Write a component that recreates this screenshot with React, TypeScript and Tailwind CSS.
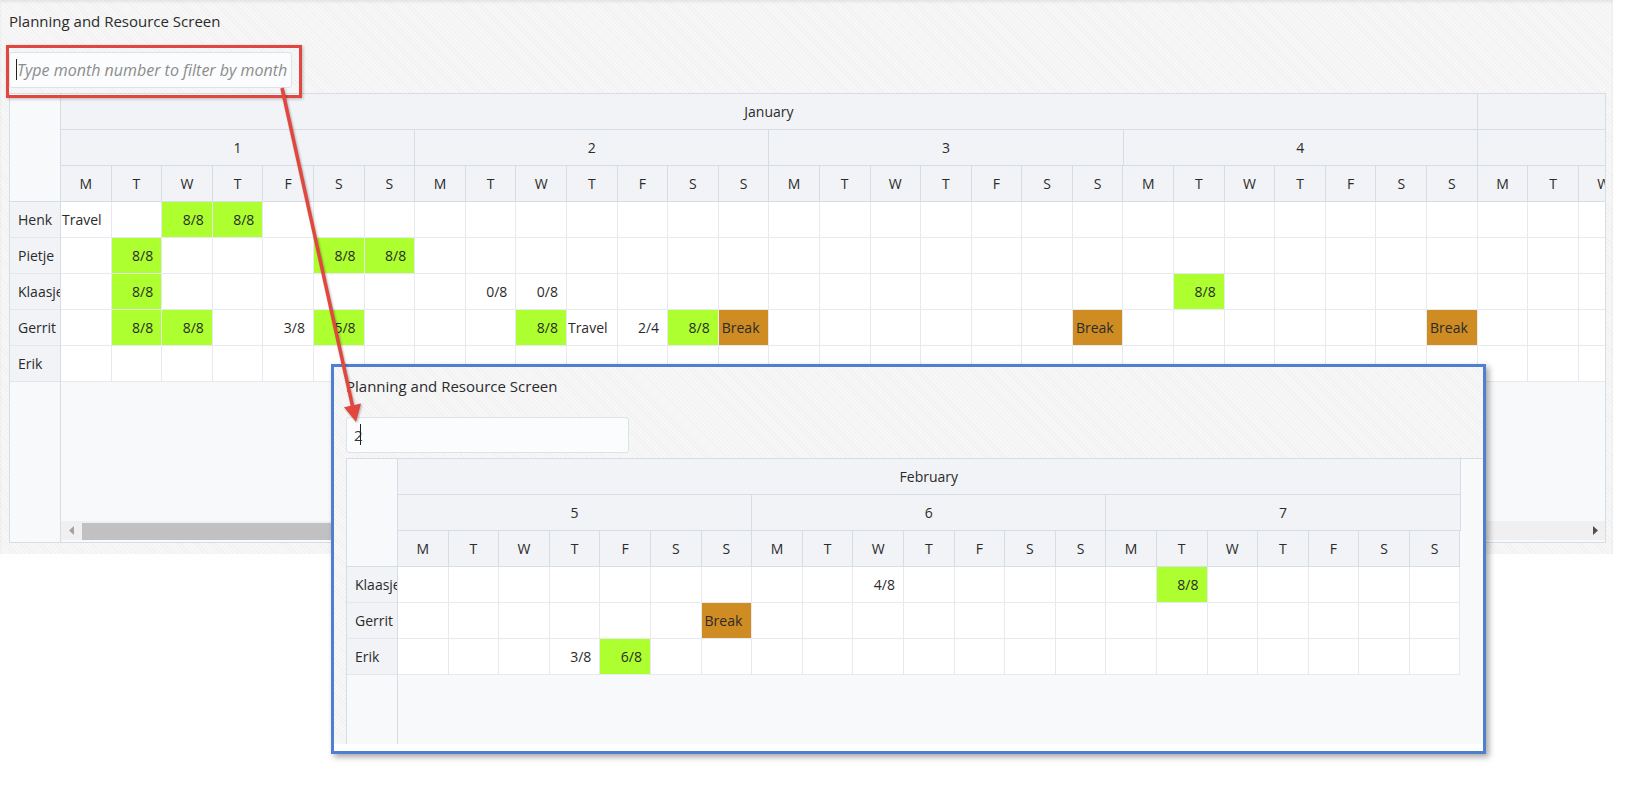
import clsx from 'clsx';

type Kind = 'ok' | 'plain' | 'travel' | 'break';
type Cell = { t: string; k: Kind };
type Row = { name: string; cells: Record<number, Cell> };
type Span = { label: string; w: string };

const DAYS = ['M', 'T', 'W', 'T', 'F', 'S', 'S'];

const ok = (t = '8/8'): Cell => ({ t, k: 'ok' });
const plain = (t: string): Cell => ({ t, k: 'plain' });
const travel: Cell = { t: 'Travel', k: 'travel' };
const brk: Cell = { t: 'Break', k: 'break' };

const mainMonths: Span[] = [
  { label: 'January', w: 'w-[1416.8px]' },
  { label: 'February', w: 'w-[354.2px]' },
];
const mainWeeks = [1, 2, 3, 4, 5];
const mainRows: Row[] = [
  { name: 'Henk', cells: { 0: travel, 2: ok(), 3: ok() } },
  { name: 'Pietje', cells: { 1: ok(), 5: ok(), 6: ok() } },
  { name: 'Klaasje', cells: { 1: ok(), 8: plain('0/8'), 9: plain('0/8'), 22: ok() } },
  {
    name: 'Gerrit',
    cells: {
      1: ok(),
      2: ok(),
      4: plain('3/8'),
      5: ok('5/8'),
      9: ok(),
      10: travel,
      11: plain('2/4'),
      12: ok(),
      13: brk,
      20: brk,
      27: brk,
    },
  },
  { name: 'Erik', cells: {} },
];

const febMonths: Span[] = [{ label: 'February', w: 'w-[1062.6px]' }];
const febWeeks = [5, 6, 7];
const febRows: Row[] = [
  { name: 'Klaasje', cells: { 9: plain('4/8'), 15: ok() } },
  { name: 'Gerrit', cells: { 6: brk } },
  { name: 'Erik', cells: { 3: plain('3/8'), 4: ok('6/8') } },
];

const hatch =
  'bg-[repeating-linear-gradient(45deg,#f1f1f1_0px,#f1f1f1_1px,#f7f7f7_1px,#f7f7f7_3px)]';

function DayCell({ cell }: { cell?: Cell }) {
  const k = cell?.k;
  return (
    <div
      className={clsx(
        'h-[36px] w-[50.6px] shrink-0 border-r border-b border-[#e6e9ed] flex items-center whitespace-nowrap overflow-hidden',
        k === 'ok' ? 'bg-[#adff2f]' : k === 'break' ? 'bg-[#cf8c22]' : 'bg-white',
        (k === 'ok' || k === 'plain') && 'justify-end pr-[8px]',
        k === 'travel' && 'pl-[1px]',
        k === 'break' && 'pl-[3px]',
      )}
    >
      {cell?.t}
    </div>
  );
}

function Scrollbar() {
  return (
    <div className="h-[19px] bg-[#f0f0f0] flex items-end shrink-0">
      <div className="w-[21px] h-[19px] flex items-center justify-center">
        <svg width="5" height="9" viewBox="0 0 5 9">
          <polygon points="5,0 5,9 0,4.5" fill="#a3a3a3" />
        </svg>
      </div>
      <div className="w-[258px] h-[17px] bg-[#c1c1c1]" />
      <div className="flex-1" />
      <div className="w-[20px] h-[19px] flex items-center justify-center">
        <svg width="5" height="9" viewBox="0 0 5 9">
          <polygon points="0,0 0,9 5,4.5" fill="#505050" />
        </svg>
      </div>
    </div>
  );
}

function Planner({
  months,
  weeks,
  rows,
  value,
  caretLeft,
}: {
  months: Span[];
  weeks: number[];
  rows: Row[];
  value?: string;
  caretLeft: string;
}) {
  const dayCount = weeks.length * 7;
  return (
    <div className="flex flex-col">
      <div className="h-[50px] pt-[9px] text-[15px] leading-[20px] text-[#2b2b2b]">
        Planning and Resource Screen
      </div>

      <div className="relative w-[283px] h-[36px]">
        <input
          readOnly
          value={value ?? ''}
          placeholder="Type month number to filter by month"
          className="w-full h-full border border-[#dde2e7] rounded-[3px] bg-[#fbfcfd] pl-[7px] text-[15px] text-[#333] outline-none placeholder:italic placeholder:text-[16px] placeholder:text-[#8c8c8c]"
        />
        <span className={clsx('absolute top-[7px] h-[21px] w-px bg-[#222]', caretLeft)} />
      </div>

      <div className="mt-[5px] w-[1597px] h-[450px] border border-[#d6dde5] flex overflow-hidden">
        {/* names */}
        <div className="w-[51px] shrink-0 border-r border-[#d6dde5] bg-[#f8f9fb] flex flex-col">
          <div className="h-[108px] shrink-0 border-b border-[#d6dde5]" />
          {rows.map((r) => (
            <div
              key={r.name}
              className="h-[36px] shrink-0 border-b border-[#e3e7eb] bg-[#f1f3f6] pl-[8px] flex items-center whitespace-nowrap overflow-hidden"
            >
              {r.name}
            </div>
          ))}
        </div>

        {/* days */}
        <div className="flex-1 min-w-0 overflow-hidden flex flex-col bg-[#f8f9fb]">
          <div className="w-max">
            <div className="flex">
              {months.map((m) => (
                <div
                  key={m.label}
                  className={clsx(
                    m.w,
                    'h-[36px] shrink-0 border-r border-b border-[#d6dde5] bg-[#f1f3f6] flex items-center justify-center',
                  )}
                >
                  {m.label}
                </div>
              ))}
            </div>
            <div className="flex">
              {weeks.map((w) => (
                <div
                  key={w}
                  className="w-[354.2px] h-[36px] shrink-0 border-r border-b border-[#d6dde5] bg-[#f1f3f6] flex items-center justify-center"
                >
                  {w}
                </div>
              ))}
            </div>
            <div className="flex">
              {Array.from({ length: dayCount }, (_, i) => (
                <div
                  key={i}
                  className="w-[50.6px] h-[36px] shrink-0 border-r border-b border-[#d6dde5] bg-[#f1f3f6] flex items-center justify-center"
                >
                  {DAYS[i % 7]}
                </div>
              ))}
            </div>
            {rows.map((r) => (
              <div key={r.name} className="flex">
                {Array.from({ length: dayCount }, (_, i) => (
                  <DayCell key={i} cell={r.cells[i]} />
                ))}
              </div>
            ))}
          </div>
          <div className="flex-1" />
          <Scrollbar />
          <div className="h-[2px] shrink-0" />
        </div>
      </div>
    </div>
  );
}

export default function App() {
  return (
    <div className="relative w-[1627px] h-[788px] bg-white overflow-hidden text-[14px] text-[#2b2b2b] font-['Open_Sans',sans-serif]">
      {/* page */}
      <div
        className={clsx(
          'w-[1613px] h-[554px] pl-[9px] pt-[2px] shadow-[inset_0_2px_3px_rgba(0,0,0,0.07)]',
          hatch,
        )}
      >
        <Planner months={mainMonths} weeks={mainWeeks} rows={mainRows} caretLeft="left-[7px]" />
      </div>

      {/* filtered view */}
      <div className="absolute left-[331px] top-[364px] w-[1155px] h-[390px] border-[3px] border-[#4e7fd0] bg-white shadow-[3px_3px_6px_rgba(0,0,0,0.35)] flex flex-col overflow-hidden">
        <div className={clsx('h-[377px] shrink-0 pl-[12px] overflow-hidden', hatch)}>
          <Planner months={febMonths} weeks={febWeeks} rows={febRows} value="2" caretLeft="left-[14px]" />
        </div>
      </div>

      {/* annotations */}
      <div className="absolute left-[6px] top-[45px] w-[296px] h-[53px] border-[3px] border-[#e2473f] shadow-[1px_1px_3px_rgba(0,0,0,0.25)]" />
      <svg className="absolute inset-0 pointer-events-none" width="1627" height="788">
        <g style={{ filter: 'drop-shadow(1px 1px 1px rgba(0,0,0,0.3))' }}>
          <line x1="282" y1="88" x2="352.5" y2="406" stroke="#e2473f" strokeWidth="3.5" />
          <polygon points="356,422 361,403.5 344,407.3" fill="#e2473f" />
        </g>
      </svg>
    </div>
  );
}
